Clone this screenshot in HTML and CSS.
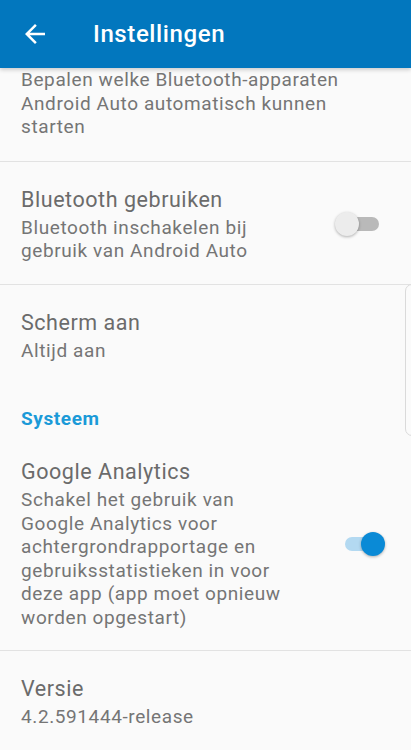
FILE: index.html
```html
<!DOCTYPE html>
<html lang="nl">
<head>
  <meta charset="UTF-8">
  <meta name="viewport" content="width=device-width, initial-scale=1.0">
  <title>Instellingen</title>
  <link rel="stylesheet" href="styles.css">
</head>
<body>
  <header class="appbar">
    <button class="back" aria-label="Terug">
      <svg width="30" height="30" viewBox="0 0 24 24">
        <path d="M20 11H7.83l5.59-5.59L12 4l-8 8 8 8 1.41-1.41L7.83 13H20v-2z" fill="#ffffff"/>
      </svg>
    </button>
    <h1>Instellingen</h1>
  </header>

  <main class="prefs">
    <div class="pref pref-cut">
      <div class="pref-text">
        <div class="summary wide">Bepalen welke Bluetooth-apparaten Android Auto automatisch kunnen starten</div>
      </div>
    </div>

    <div class="pref">
      <div class="pref-text">
        <div class="title">Bluetooth gebruiken</div>
        <div class="summary">Bluetooth inschakelen bij gebruik van Android Auto</div>
      </div>
      <span class="switch"><span class="thumb"></span></span>
    </div>

    <div class="pref no-line">
      <div class="pref-text">
        <div class="title">Scherm aan</div>
        <div class="summary">Altijd aan</div>
      </div>
    </div>

    <div class="category">Systeem</div>

    <div class="pref">
      <div class="pref-text">
        <div class="title">Google Analytics</div>
        <div class="summary">Schakel het gebruik van Google Analytics voor achtergrondrapportage en gebruiksstatistieken in voor deze app (app moet opnieuw worden opgestart)</div>
      </div>
      <span class="switch on"><span class="thumb"></span></span>
    </div>

    <div class="pref no-line">
      <div class="pref-text">
        <div class="title">Versie</div>
        <div class="summary">4.2.591444-release</div>
      </div>
    </div>

    <div class="edge-panel"></div>
  </main>
</body>
</html>
```

FILE: styles.css
```css
body {
  font-family: Roboto, 'Noto Sans', sans-serif;
  background-color: #fafafa;
  margin: 0;
  width: 411px;
  height: 750px;
  overflow: hidden;
}
.appbar {
  position: relative;
  z-index: 2;
  height: 68px;
  background-color: #0277be;
  display: flex;
  align-items: center;
  box-shadow: 0 2px 4px rgba(0, 0, 0, 0.18);
}
.back {
  background: none;
  border: none;
  padding: 0;
  margin-left: 20px;
  width: 30px;
  height: 30px;
}
.appbar h1 {
  margin: 0 0 0 43px;
  color: #ffffff;
  font-size: 24px;
  font-weight: 500;
  letter-spacing: 0.6px;
}
.prefs {
  position: relative;
}
.pref {
  display: flex;
  align-items: center;
  padding: 24px 26px 21px 21px;
  border-bottom: 1px solid #e2e2e2;
}
.pref.no-line {
  border-bottom: none;
}
.pref-cut {
  padding-top: 0;
  padding-bottom: 22px;
}
.pref-text {
  flex: 1;
}
.title {
  font-size: 21.5px;
  line-height: 28px;
  letter-spacing: 0.55px;
  color: #6b6b6b;
  margin-bottom: 2px;
}
.summary {
  font-size: 19px;
  line-height: 23.5px;
  letter-spacing: 0.6px;
  color: #757575;
  max-width: 266px;
}
.summary.wide {
  max-width: 370px;
}
.category {
  padding: 24px 21px 3px;
  font-size: 19px;
  line-height: 24px;
  letter-spacing: 0.6px;
  font-weight: 700;
  color: #1b9ad8;
}
.switch {
  position: relative;
  width: 50px;
  height: 24px;
  margin-left: 12px;
  flex-shrink: 0;
}
.switch::before {
  content: '';
  position: absolute;
  left: 10px;
  right: 6px;
  top: 5px;
  height: 14px;
  border-radius: 7px;
  background-color: #b9b9b9;
}
.thumb {
  position: absolute;
  left: 0;
  top: 0;
  width: 24px;
  height: 24px;
  border-radius: 50%;
  background-color: #ececec;
  box-shadow: 0 1px 3px rgba(0, 0, 0, 0.3);
}
.switch.on::before {
  background-color: #b3d9f1;
}
.switch.on .thumb {
  left: 26px;
  background-color: #0a8ad6;
}
.edge-panel {
  position: absolute;
  right: -8px;
  top: 216px;
  width: 12px;
  height: 150px;
  border: 1px solid #dadada;
  border-radius: 7px;
  background-color: #fbfbfb;
}
```
